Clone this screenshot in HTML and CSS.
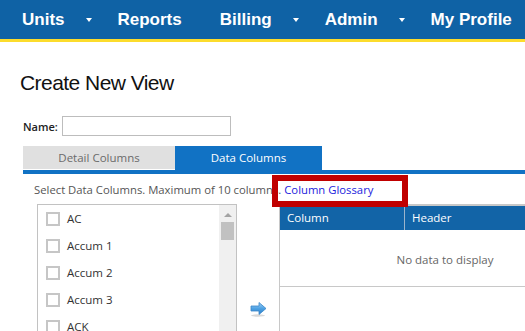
FILE: index.html
```html
<!DOCTYPE html>
<html lang="en">
<head>
    <meta charset="UTF-8">
    <meta name="viewport" content="width=device-width, initial-scale=1.0">
    <title>Create New View</title>
    <link rel="stylesheet" href="styles.css">
</head>
<body>
    <nav class="nav">
        <a class="nav-item has-menu" href="#">Units<span class="caret"></span></a>
        <a class="nav-item" href="#">Reports</a>
        <a class="nav-item has-menu" href="#">Billing<span class="caret"></span></a>
        <a class="nav-item has-menu" href="#">Admin<span class="caret"></span></a>
        <a class="nav-item" href="#">My Profile</a>
    </nav>

    <div class="page">
        <h1 class="title">Create New View</h1>

        <div class="form">
            <div class="name-row">
                <label for="view-name">Name:</label>
                <input type="text" id="view-name" class="name-input">
            </div>

            <div class="tabs">
                <div class="tab">Detail Columns</div>
                <div class="tab active">Data Columns</div>
            </div>

            <div class="panel">
                <p class="hint">Select Data Columns. Maximum of 10 columns. <a href="#" class="glossary">Column Glossary</a></p>

                <div class="picker">
                    <div class="listbox">
                        <ul class="options">
                            <li><span class="check"></span>AC</li>
                            <li><span class="check"></span>Accum 1</li>
                            <li><span class="check"></span>Accum 2</li>
                            <li><span class="check"></span>Accum 3</li>
                            <li><span class="check"></span>ACK</li>
                        </ul>
                        <div class="scrollbar">
                            <span class="scroll-up"></span>
                            <span class="scroll-thumb"></span>
                        </div>
                    </div>

                    <div class="mover">
                        <svg width="18" height="16" viewBox="0 0 18 16">
                            <defs>
                                <linearGradient id="arrowFill" x1="0" y1="0" x2="0" y2="1">
                                    <stop offset="0" stop-color="#9fd0f5"/>
                                    <stop offset="0.5" stop-color="#4ea2e4"/>
                                    <stop offset="1" stop-color="#2f7fc8"/>
                                </linearGradient>
                            </defs>
                            <ellipse cx="8" cy="14.5" rx="7" ry="1.2" fill="#d8d8d8"/>
                            <path d="M1 5 H9 V1.5 L16 7.5 L9 13.5 V10 H1 Z" fill="url(#arrowFill)" stroke="#3a86c8" stroke-width="0.8"/>
                        </svg>
                    </div>

                    <div class="grid">
                        <div class="grid-head">
                            <div class="grid-col col-name">Column</div>
                            <div class="grid-col">Header</div>
                        </div>
                        <div class="grid-empty">No data to display</div>
                    </div>
                </div>
            </div>
        </div>
    </div>

    <div class="callout"></div>
</body>
</html>
```

FILE: styles.css
```css
body {
    margin: 0;
    width: 525px;
    height: 331px;
    overflow: hidden;
    font-family: "Open Sans", "Noto Sans", sans-serif;
    background-color: #fff;
    position: relative;
}

.nav {
    display: flex;
    align-items: center;
    height: 39px;
    padding-left: 3px;
    background-color: #0f62a5;
    border-bottom: 3px solid #fcdc2c;
    white-space: nowrap;
}

.nav-item {
    display: flex;
    align-items: center;
    padding: 0 19px;
    color: #fff;
    font-family: "Liberation Sans", Arial, sans-serif;
    font-weight: bold;
    font-size: 17px;
    text-decoration: none;
}

.nav-item.has-menu {
    padding-right: 7px;
}

.caret {
    margin-left: 21px;
    width: 0;
    height: 0;
    border-left: 3.5px solid transparent;
    border-right: 3.5px solid transparent;
    border-top: 4px solid #fff;
}

.page {
    padding-left: 20px;
}

.title {
    margin: 28px 0 0;
    font-family: "Liberation Sans", Arial, sans-serif;
    font-weight: normal;
    font-size: 21px;
    line-height: 26px;
    letter-spacing: -0.55px;
    color: #111;
}

.form {
    padding-left: 3px;
}

.name-row {
    display: flex;
    align-items: center;
    gap: 4px;
    margin-top: 20px;
    height: 20px;
    font-size: 11px;
    font-weight: 600;
    color: #222;
}

.name-input {
    width: 167px;
    height: 18px;
    padding: 0;
    margin: 0;
    border: 1px solid #bdbdbd;
    box-sizing: content-box;
}

.tabs {
    display: flex;
    align-items: flex-start;
    margin-top: 10px;
    height: 24px;
    border-bottom: 4px solid #1172c4;
}

.tab {
    width: 152px;
    height: 23px;
    line-height: 23px;
    text-align: center;
    font-size: 11.5px;
    color: #6b6b6b;
    background-color: #e0e0e0;
}

.tab.active {
    width: 147px;
    height: 24px;
    color: #fff;
    background-color: #1172c4;
}

.panel {
    padding-left: 11px;
}

.hint {
    margin: 0;
    padding-top: 8px;
    height: 22px;
    line-height: 16px;
    font-size: 11.3px;
    color: #555;
    white-space: nowrap;
}

.glossary {
    color: #2222dd;
    text-decoration: none;
}

.picker {
    display: flex;
    align-items: flex-start;
}

.listbox {
    display: flex;
    flex-shrink: 0;
    margin-left: 3px;
    width: 198px;
    height: 140px;
    border: 1px solid #c2c2c2;
}

.options {
    flex: 1;
    list-style: none;
    margin: 0;
    padding: 7px 0 0 8px;
}

.options li {
    display: flex;
    align-items: flex-start;
    height: 27px;
    line-height: 14px;
    font-size: 11.5px;
    color: #333;
}

.check {
    width: 10px;
    height: 10px;
    margin-right: 7px;
    border: 2px solid #c6c6c6;
}

.scrollbar {
    width: 17px;
    background-color: #f0f0f0;
    display: flex;
    flex-direction: column;
    align-items: center;
}

.scroll-up {
    margin-top: 8px;
    width: 0;
    height: 0;
    border-left: 4px solid transparent;
    border-right: 4px solid transparent;
    border-bottom: 4px solid #a3a3a3;
}

.scroll-thumb {
    margin-top: 5px;
    width: 13px;
    height: 18px;
    background-color: #c1c1c1;
}

.mover {
    flex-shrink: 0;
    width: 42px;
    padding-top: 97px;
    padding-left: 13px;
    box-sizing: border-box;
}

.mover svg {
    display: block;
}

.grid {
    width: 330px;
    height: 130px;
    flex-shrink: 0;
    border-left: 1px solid #c8c8c8;
    border-top: 2px solid #c8c8c8;
}

.grid-head {
    display: flex;
    height: 24px;
    background-color: #1264a7;
    color: #fff;
    font-size: 11.5px;
}

.grid-col {
    padding-left: 7px;
    line-height: 24px;
}

.col-name {
    width: 117px;
    border-right: 1px solid #9bb4cc;
}

.grid-empty {
    height: 56px;
    line-height: 60px;
    text-align: center;
    font-size: 11.5px;
    color: #666;
    border-bottom: 1px solid #c8c8c8;
}

.callout {
    position: absolute;
    left: 272px;
    top: 175px;
    width: 124px;
    height: 20px;
    border: 6px solid #c00000;
}
```
